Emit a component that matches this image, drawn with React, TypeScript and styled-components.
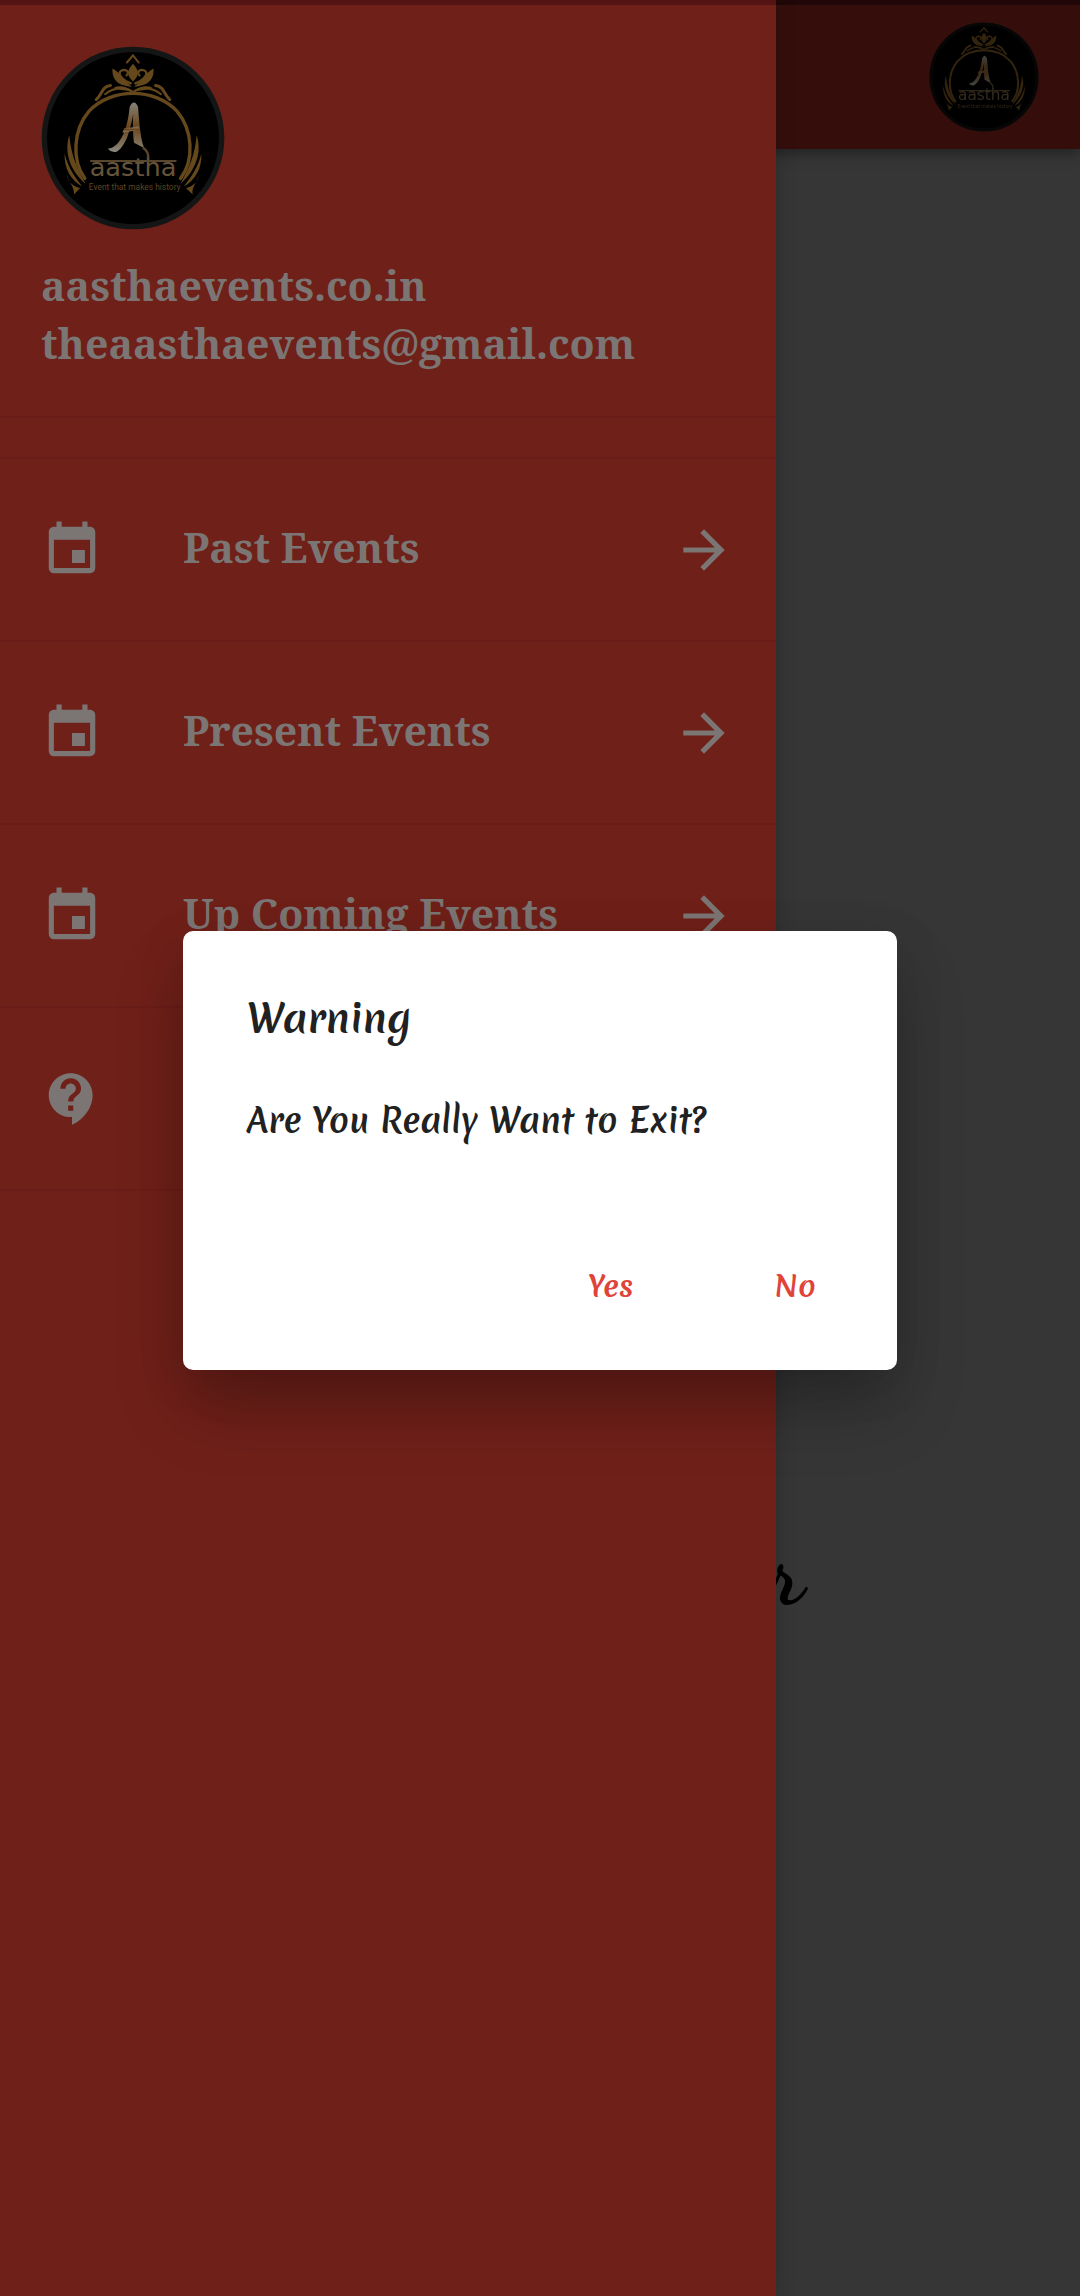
import React from 'react';
import styled, { createGlobalStyle } from 'styled-components';
import { MdArrowForward, MdContactSupport, MdEvent } from 'react-icons/md';

const GlobalStyle = createGlobalStyle`
  * { box-sizing: border-box; }
  body { margin: 0; background: #363636; }
  button { font: inherit; color: inherit; border: 0; background: none; padding: 0; cursor: pointer; }
`;

const serif = '"Noto Serif", "DejaVu Serif Condensed", "DejaVu Serif", serif';
const script = '"Merienda", "Liberation Serif", serif';
const brush = '"Dancing Script", "Merienda", "Liberation Serif", cursive';

const Screen = styled.div`
  position: relative;
  display: flex;
  flex-direction: column;
  min-height: 100vh;
  overflow: hidden;
  background: #363636;
`;

const StatusBar = styled.div`
  height: 5px;
  background: #240809;
`;

const AppBar = styled.header`
  display: flex;
  align-items: center;
  justify-content: flex-end;
  height: 144px;
  padding: 0 41px;
  background: #350e0c;
  box-shadow: 0 4px 14px rgba(0, 0, 0, 0.4);
`;

const Page = styled.main`
  flex: 1;
  display: flex;
  flex-direction: column;
  align-items: flex-end;
  padding: 1373px 276px 0 0;
`;

const PageTitle = styled.p`
  margin: 0;
  font: bold 92px/104px ${brush};
  color: #000;
`;

const Drawer = styled.nav`
  position: absolute;
  inset: 0 auto 0 0;
  width: 86%;
  max-width: 776px;
  display: flex;
  flex-direction: column;
  background: #6f2019;
  border-top: 5px solid #541414;
  box-shadow: 0 0 20px rgba(0, 0, 0, 0.2);
  font-family: ${serif};
  font-weight: bold;
  color: #7b7574;
`;

const DrawerHeader = styled.div`
  display: flex;
  flex-direction: column;
  align-items: flex-start;
  gap: 26px;
  height: 413px;
  padding: 41px 41px 0;
  border-bottom: 2px solid #6a1d18;
`;

const Contact = styled.address`
  font-style: normal;
  font-size: 41px;
  line-height: 58px;
`;

const Menu = styled.ul`
  list-style: none;
  margin: 39px 0 0;
  padding: 0;
  border-top: 2px solid #6a1d18;
`;

const MenuItem = styled.li`
  border-bottom: 2px solid #6a1d18;
`;

const MenuButton = styled.button`
  display: flex;
  align-items: center;
  width: 100%;
  height: 181px;
  padding: 0 41px;
  font-size: 41px;
  line-height: 58px;
  text-align: left;
  svg { width: 62px; height: 62px; flex: none; }
`;

const MenuLabel = styled.span`
  flex: 1;
  padding: 0 0 6px 80px;
`;

const Scrim = styled.div`
  position: absolute;
  inset: 5px 0 0;
  display: flex;
  align-items: center;
  justify-content: center;
  padding: 0 100px;
`;

const Dialog = styled.section`
  display: flex;
  flex-direction: column;
  width: 100%;
  max-width: 714px;
  padding: 58px 64px 44px;
  border-radius: 10px;
  background: #fff;
  color: #212121;
  font-family: ${script};
  font-weight: bold;
  box-shadow: 0 40px 70px -6px rgba(0, 0, 0, 0.26), 0 10px 50px rgba(0, 0, 0, 0.1);
`;

const DialogTitle = styled.h1`
  margin: 0;
  font-size: 39px;
  line-height: 58px;
`;

const DialogText = styled.p`
  margin: 50px 0 0;
  font-size: 33px;
  line-height: 48px;
`;

const DialogActions = styled.div`
  display: flex;
  justify-content: flex-end;
  gap: 108px;
  margin-top: 101px;
`;

const DialogButton = styled.button`
  min-width: 76px;
  height: 80px;
  font-size: 29px;
  color: #e04338;
`;

const LogoSvg = styled.svg<{ $size: number; $dim?: boolean }>`
  display: block;
  flex: none;
  width: ${(p) => p.$size}px;
  height: ${(p) => p.$size}px;
  filter: ${(p) => (p.$dim ? 'brightness(0.5)' : 'none')};
`;

function Logo({ size, dim }: { size: number; dim?: boolean }) {
  const id = dim ? 'goldSmall' : 'goldLarge';
  return (
    <LogoSvg $size={size} $dim={dim} viewBox="126 141 546 546" role="img" aria-label="Aastha logo">
      <defs>
        <linearGradient id={id} x1="0" y1="0" x2="0" y2="1">
          <stop offset="0" stopColor="#85827a" />
          <stop offset="0.5" stopColor="#6b4416" />
          <stop offset="1" stopColor="#8a887f" />
        </linearGradient>
      </defs>
      <circle cx="399" cy="414" r="263" fill="#000" stroke={dim ? '#0c0c0c' : '#141616'} strokeWidth="16" />
      <g fill="none" stroke="#65481b" strokeLinecap="round">
        <path d="M256 534C216 478 222 390 268 335C334 264 464 264 530 335C576 390 582 478 540 534" strokeWidth="10" />
        <path d="M381 190L399 169L416 190" strokeWidth="6" />
        <path d="M290 300C308 284 306 262 332 258M508 300C490 284 492 262 466 258" strokeWidth="9" />
        <path d="M316 284C344 262 376 262 399 278C422 262 454 262 482 284" strokeWidth="6" />
        <path d="M392 252C352 236 352 212 374 212C386 214 386 224 380 228M406 252C446 236 446 212 424 212C412 214 412 224 418 228" strokeWidth="7" />
      </g>
      <g fill="#65481b">
        <path d="M399 194C418 214 418 230 399 246C380 230 380 214 399 194Z" />
        <path d="M338 208C336 246 360 260 396 262C372 246 366 224 338 208Z" />
        <path d="M460 208C462 246 438 260 402 262C426 246 432 224 460 208Z" />
        <path d="M342 264C362 256 386 264 399 276C412 264 436 256 456 264C436 276 416 268 399 280C382 268 362 276 342 264Z" />
        <path d="M210 406C194 456 212 510 258 550C228 494 216 464 210 406Z" />
        <path d="M588 406C604 456 586 510 540 550C570 494 582 464 588 406Z" />
        <path d="M196 460C194 506 216 540 248 558C226 528 208 506 196 460Z" />
        <path d="M602 460C604 506 582 540 550 558C572 528 590 506 602 460Z" />
        <path d="M202 522C206 546 226 560 242 562L224 582C226 560 210 548 202 522Z" />
        <path d="M596 522C592 546 572 560 556 562L576 582C572 560 588 548 596 522Z" />
      </g>
      <g fill={`url(#${id})`}>
        <path d="M389 322Q402 296 414 322C418 370 420 410 432 444L402 428C398 396 398 360 400 342C390 392 380 434 352 454Q336 460 324 446C364 442 384 380 389 322Z" />
        <path d="M372 386L416 380L418 390L368 398Z" />
      </g>
      <g textAnchor="middle" fontWeight="normal">
        <text x="399" y="526" fontSize="76" fontFamily='"DejaVu Sans", sans-serif' fill="#66543a">
          aastha
        </text>
        <text x="404" y="567" fontSize="25" fontFamily="Roboto, sans-serif" fill="#5c4420">
          Event that makes history
        </text>
      </g>
      <path d="M272 482H528" stroke="#58472c" strokeWidth="6" />
      <path d="M428 442Q446 454 444 474" stroke="#58472c" strokeWidth="7" fill="none" />
    </LogoSvg>
  );
}

const events = ['Past Events', 'Present Events', 'Up Coming Events'];

export default function App() {
  return (
    <>
      <GlobalStyle />
      <Screen>
        <StatusBar />
        <AppBar>
          <Logo size={110} dim />
        </AppBar>
        <Page>
          <PageTitle>r</PageTitle>
        </Page>

        <Drawer>
          <DrawerHeader>
            <Logo size={184} />
            <Contact>
              aasthaevents.co.in
              <br />
              theaasthaevents@gmail.com
            </Contact>
          </DrawerHeader>
          <Menu>
            {events.map((label) => (
              <MenuItem key={label}>
                <MenuButton type="button">
                  <MdEvent />
                  <MenuLabel>{label}</MenuLabel>
                  <MdArrowForward />
                </MenuButton>
              </MenuItem>
            ))}
            <MenuItem>
              <MenuButton type="button" aria-label="Help">
                <MdContactSupport />
              </MenuButton>
            </MenuItem>
          </Menu>
        </Drawer>

        <Scrim>
          <Dialog role="alertdialog" aria-labelledby="exit-title" aria-describedby="exit-text">
            <DialogTitle id="exit-title">Warning</DialogTitle>
            <DialogText id="exit-text">Are You Really Want to Exit?</DialogText>
            <DialogActions>
              <DialogButton type="button">Yes</DialogButton>
              <DialogButton type="button">No</DialogButton>
            </DialogActions>
          </Dialog>
        </Scrim>
      </Screen>
    </>
  );
}
